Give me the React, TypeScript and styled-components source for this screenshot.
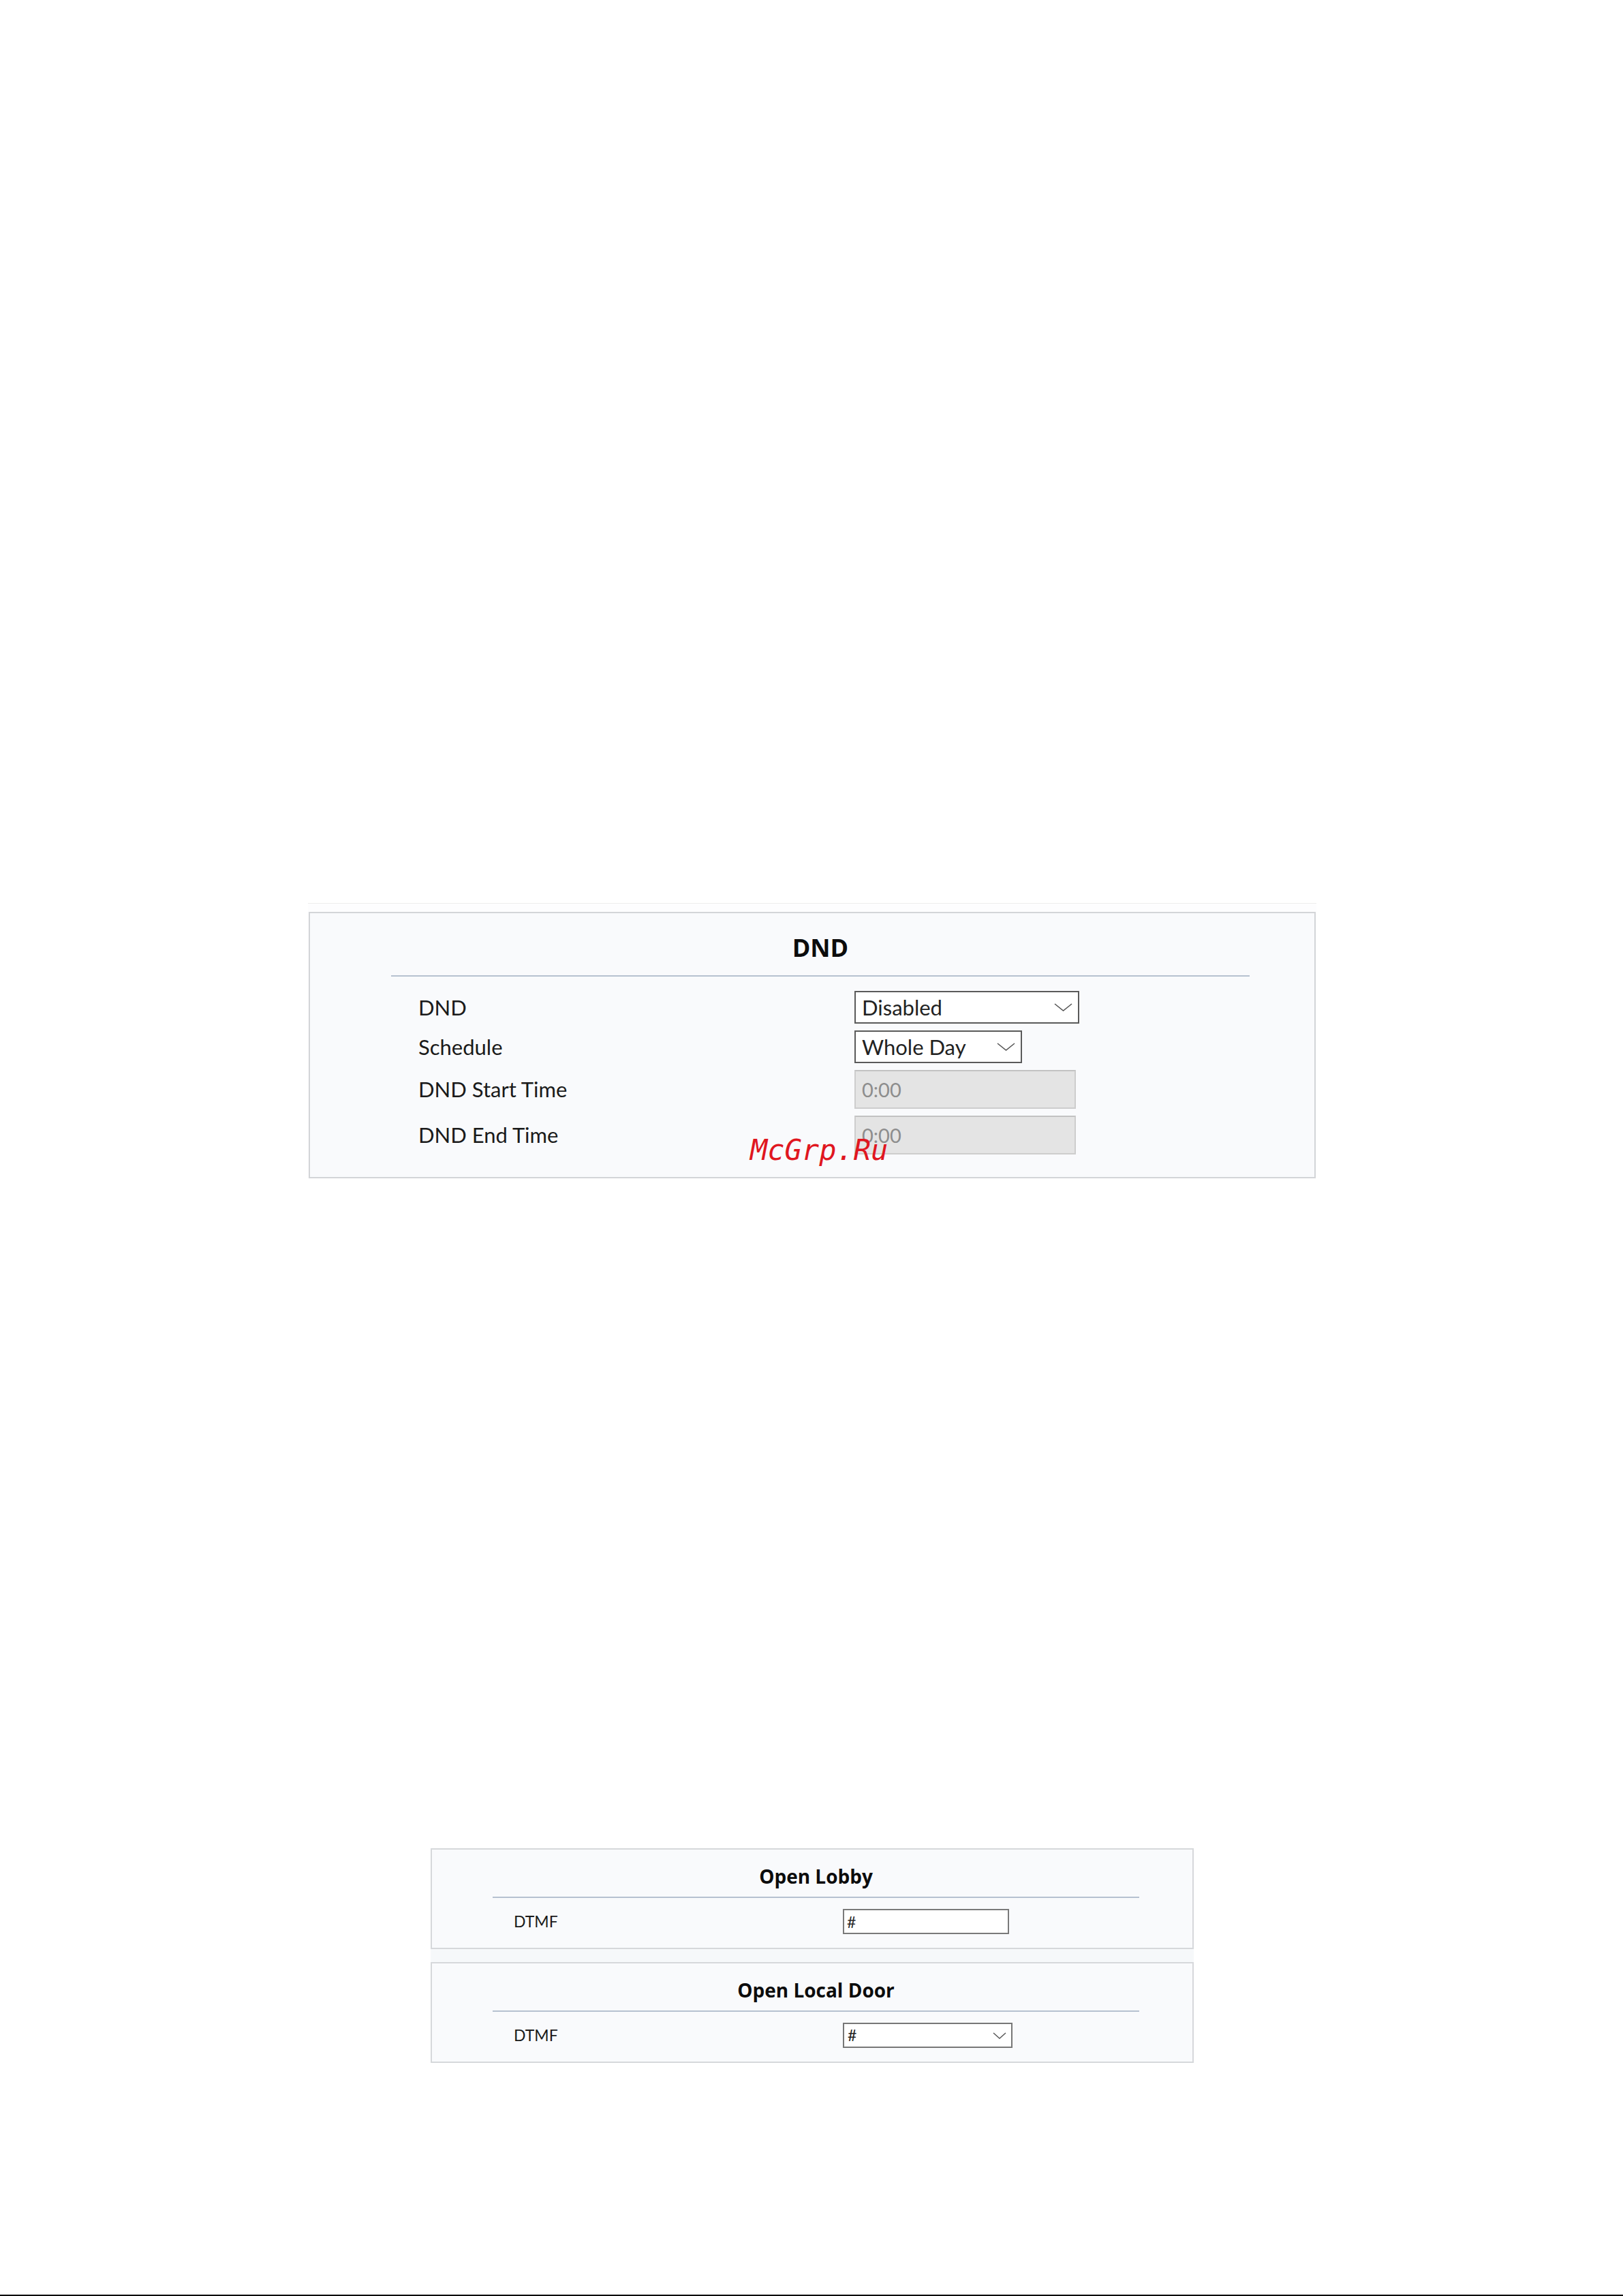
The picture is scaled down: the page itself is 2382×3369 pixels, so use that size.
import React from 'react'
import styled, { createGlobalStyle } from 'styled-components'

const GlobalStyle = createGlobalStyle`
	html,
	body {
		margin: 0;
		padding: 0;
		background: #ffffff;
	}
	body {
		font-family: Lato, 'Open Sans', sans-serif;
		color: #222222;
	}
`

type Size = 'large' | 'small'

const metrics = {
	large: {
		titleSize: 36,
		titleLine: 46,
		labelSize: 31,
		padTop: 28,
		padBottom: 33,
		padLeft: 119,
		padRight: 95,
		titleGap: 17,
		rowsGap: 21,
		rowIndent: 40,
		labelCol: 640,
		rowGap: 10,
		border: '#d3d5d8',
	},
	small: {
		titleSize: 28,
		titleLine: 36,
		labelSize: 23,
		padTop: 21,
		padBottom: 20,
		padLeft: 89,
		padRight: 78,
		titleGap: 12,
		rowsGap: 16,
		rowIndent: 31,
		labelCol: 483,
		rowGap: 8,
		border: '#d6d8db',
	},
}

export default function App() {
	return (
		<>
			<GlobalStyle />
			<Page>
				<DndFrame>
					<Panel $size="large">
						<Title $size="large">DND</Title>
						<Divider />
						<Rows $size="large">
							<Label $size="large">DND</Label>
							<Select $size="large" $width={330} $height={48}>
								<span>Disabled</span>
								<Chevron size="large" />
							</Select>
							<Label $size="large">Schedule</Label>
							<Select $size="large" $width={246} $height={48}>
								<span>Whole Day</span>
								<Chevron size="large" />
							</Select>
							<Label $size="large">DND Start Time</Label>
							<DisabledField readOnly disabled value="0:00" />
							<Label $size="large">DND End Time</Label>
							<DisabledField readOnly disabled value="0:00" />
						</Rows>
						<Watermark>McGrp.Ru</Watermark>
					</Panel>
				</DndFrame>

				<Group>
					<Panel $size="small">
						<Title $size="small">Open Lobby</Title>
						<Divider />
						<Rows $size="small">
							<Label $size="small">DTMF</Label>
							<TextField readOnly value="#" />
						</Rows>
					</Panel>
					<Panel $size="small">
						<Title $size="small">Open Local Door</Title>
						<Divider />
						<Rows $size="small">
							<Label $size="small">DTMF</Label>
							<Select $size="small" $width={249} $height={37}>
								<span>#</span>
								<Chevron size="small" />
							</Select>
						</Rows>
					</Panel>
				</Group>

				<BottomRule />
			</Page>
		</>
	)
}

function Chevron({ size }: { size: Size }) {
	const w = size === 'large' ? 27 : 20
	const h = size === 'large' ? 12 : 10
	return (
		<svg width={w} height={h} viewBox={`0 0 ${w} ${h}`} fill="none">
			<path
				d={`M1 1 L${w / 2} ${h - 1} L${w - 1} 1`}
				stroke="#555"
				strokeWidth={size === 'large' ? 1.6 : 1.4}
			/>
		</svg>
	)
}

const Page = styled.div`
	width: 2382px;
	min-height: 3369px;
	box-sizing: border-box;
	padding-top: 1325px;
	display: flex;
	flex-direction: column;
`

const DndFrame = styled.div`
	margin-left: 452px;
	width: 1480px;
	border-top: 1px solid #ededed;
	padding-top: 12px;
	background: #fdfdfe;
	box-sizing: border-box;
`

const Panel = styled.section<{ $size: Size }>`
	position: relative;
	margin-left: ${p => (p.$size === 'large' ? '1px' : '0')};
	width: ${p => (p.$size === 'large' ? '1478px' : '100%')};
	box-sizing: border-box;
	background: #f9fafc;
	border: 2px solid ${p => metrics[p.$size].border};
	padding: ${p => {
		const m = metrics[p.$size]
		return `${m.padTop}px ${m.padRight}px ${m.padBottom}px ${m.padLeft}px`
	}};
`

const Title = styled.h2<{ $size: Size }>`
	margin: 0;
	font-family: 'Open Sans', sans-serif;
	font-weight: 700;
	font-size: ${p => metrics[p.$size].titleSize}px;
	line-height: ${p => metrics[p.$size].titleLine}px;
	text-align: center;
	color: #0c0c0c;
	margin-bottom: ${p => metrics[p.$size].titleGap}px;
`

const Divider = styled.div`
	height: 2px;
	background: #b6c1d0;
`

const Rows = styled.div<{ $size: Size }>`
	display: grid;
	grid-template-columns: ${p => metrics[p.$size].labelCol}px auto;
	justify-content: start;
	align-items: center;
	row-gap: ${p => metrics[p.$size].rowGap}px;
	margin-top: ${p => metrics[p.$size].rowsGap}px;
	padding-left: ${p => metrics[p.$size].rowIndent}px;
`

const Label = styled.div<{ $size: Size }>`
	font-size: ${p => metrics[p.$size].labelSize}px;
	line-height: 1;
	color: #1a1a1a;
`

const Select = styled.div<{ $size: Size; $width: number; $height: number }>`
	width: ${p => p.$width}px;
	height: ${p => p.$height}px;
	box-sizing: border-box;
	display: flex;
	align-items: center;
	justify-content: space-between;
	background: #ffffff;
	border: 2px solid ${p => (p.$size === 'large' ? '#5a5a5a' : '#777777')};
	padding: ${p => (p.$size === 'large' ? '0 8px 0 9px' : '0 7px 0 5px')};
	font-size: ${p => metrics[p.$size].labelSize}px;
	line-height: 1;
	color: #222222;
`

const DisabledField = styled.input`
	width: 325px;
	height: 57px;
	box-sizing: border-box;
	margin: 0;
	padding: 0 0 0 9px;
	background: #e4e4e4;
	border: 2px solid #cdcdcd;
	border-top-color: #c2c2c2;
	font-family: Lato, sans-serif;
	font-size: 29px;
	color: #8d8d8d;
	-webkit-text-fill-color: #8d8d8d;
	opacity: 1;
	outline: none;
`

const TextField = styled.input`
	width: 244px;
	height: 37px;
	box-sizing: border-box;
	margin: 0;
	padding: 0 0 0 4px;
	background: #ffffff;
	border: 2px solid #7a7a7a;
	font-family: Lato, sans-serif;
	font-size: 23px;
	color: #2a2a2a;
	outline: none;
`

const Watermark = styled.div`
	position: absolute;
	left: 646px;
	top: 327px;
	font-family: 'DejaVu Sans Mono', 'Liberation Mono', monospace;
	font-style: italic;
	font-size: 42px;
	line-height: 1;
	color: #e0161f;
	pointer-events: none;
`

const Group = styled.div`
	margin-top: 983px;
	margin-left: 632px;
	width: 1120px;
	display: flex;
	flex-direction: column;
	gap: 19px;
	background: #f6f8fa;
`

const BottomRule = styled.div`
	margin-top: auto;
	height: 2px;
	background: #000000;
`
